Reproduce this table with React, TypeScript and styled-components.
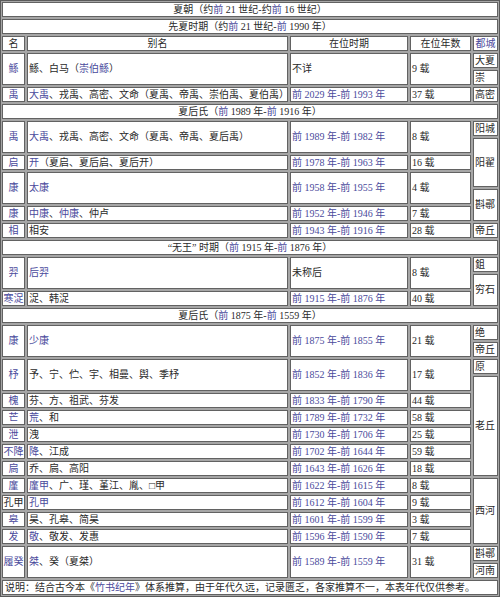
import React from 'react';
import styled, { createGlobalStyle } from 'styled-components';

const GlobalStyle = createGlobalStyle`
  body {
    margin: 0;
    background: #ffffff;
  }
`;

const Table = styled.div`
  display: grid;
  grid-template-columns: 23px 261px 118px 61px 25px;
  grid-auto-rows: 15px;
  gap: 2px;
  width: 500px;
  box-sizing: border-box;
  padding: 1px;
  border: 1px solid #5a5a5a;
  background: #a6a6a6;
  font-family: "Liberation Serif", "Noto Sans CJK SC", serif;
  font-size: 10px;
  color: #2a2a2a;
`;

const CellBox = styled.div<{ $row: string; $col: string; $center?: boolean }>`
  grid-row: ${p => p.$row};
  grid-column: ${p => p.$col};
  display: flex;
  align-items: center;
  justify-content: ${p => (p.$center ? 'center' : 'flex-start')};
  box-sizing: border-box;
  padding: 0 1px;
  background: #ffffff;
  border: 1px solid #626262;
  white-space: nowrap;
  overflow: hidden;
  line-height: 1;
`;

const Link = styled.span`
  color: #4a4a9c;
`;

const Note = styled.span`
  padding-left: 1px;
`;

type CellProps = {
  row: string;
  col: string;
  center?: boolean;
  children?: React.ReactNode;
};

// one text run per cell, so spaces next to links survive flex layout
const Cell: React.FC<CellProps> = ({ row, col, center, children }) => (
  <CellBox $row={row} $col={col} $center={center}>
    <span>{children}</span>
  </CellBox>
);

type Reign = {
  name: React.ReactNode;
  alias: React.ReactNode;
  period: React.ReactNode;
  years: string;
  rows?: number;
};

type Section = {
  title: React.ReactNode;
  reigns: Reign[];
  capitals: [string, number][];
};

const Q = () => <Link>前</Link>;

const span = (from: number, to: number) => (
  <Link>
    前 {from} 年-前 {to} 年
  </Link>
);

const sections: Section[] = [
  {
    title: (
      <>
        夏后氏（<Q /> 1989 年-<Q /> 1916 年）
      </>
    ),
    reigns: [
      {
        name: <Link>禹</Link>,
        alias: (
          <>
            <Link>大禹</Link>、戎禹、高密、文命（夏禹、帝禹、夏后禹）
          </>
        ),
        period: span(1989, 1982),
        years: '8 载',
        rows: 2,
      },
      {
        name: <Link>启</Link>,
        alias: (
          <>
            <Link>开</Link>（夏启、夏后启、夏后开）
          </>
        ),
        period: span(1978, 1963),
        years: '16 载',
      },
      {
        name: <Link>康</Link>,
        alias: <Link>太康</Link>,
        period: span(1958, 1955),
        years: '4 载',
        rows: 2,
      },
      {
        name: <Link>康</Link>,
        alias: (
          <>
            <Link>中康</Link>、<Link>仲康</Link>、仲卢
          </>
        ),
        period: span(1952, 1946),
        years: '7 载',
      },
      {
        name: <Link>相</Link>,
        alias: '相安',
        period: span(1943, 1916),
        years: '28 载',
      },
    ],
    capitals: [
      ['阳城', 1],
      ['阳翟', 3],
      ['斟鄩', 2],
      ['帝丘', 1],
    ],
  },
  {
    title: (
      <>
        “无王” 时期（<Q /> 1915 年-<Q /> 1876 年）
      </>
    ),
    reigns: [
      {
        name: <Link>羿</Link>,
        alias: <Link>后羿</Link>,
        period: '未称后',
        years: '8 载',
        rows: 2,
      },
      {
        name: <Link>寒浞</Link>,
        alias: '浞、韩浞',
        period: span(1915, 1876),
        years: '40 载',
      },
    ],
    capitals: [
      ['鉏', 1],
      ['穷石', 2],
    ],
  },
  {
    title: (
      <>
        夏后氏（<Q /> 1875 年-<Q /> 1559 年）
      </>
    ),
    reigns: [
      { name: <Link>康</Link>, alias: <Link>少康</Link>, period: span(1875, 1855), years: '21 载', rows: 2 },
      { name: <Link>杼</Link>, alias: '予、宁、伫、宇、相曼、舆、季杼', period: span(1852, 1836), years: '17 载', rows: 2 },
      { name: <Link>槐</Link>, alias: '芬、方、祖武、芬发', period: span(1833, 1790), years: '44 载' },
      {
        name: <Link>芒</Link>,
        alias: (
          <>
            <Link>荒</Link>、和
          </>
        ),
        period: span(1789, 1732),
        years: '58 载',
      },
      { name: <Link>泄</Link>, alias: '洩', period: span(1730, 1706), years: '25 载' },
      {
        name: <Link>不降</Link>,
        alias: (
          <>
            <Link>降</Link>、江成
          </>
        ),
        period: span(1702, 1644),
        years: '59 载',
      },
      { name: <Link>扃</Link>, alias: '乔、扃、高阳', period: span(1643, 1626), years: '18 载' },
      {
        name: <Link>廑</Link>,
        alias: (
          <>
            <Link>廑甲</Link>、广、瑾、堇江、胤、□甲
          </>
        ),
        period: span(1622, 1615),
        years: '8 载',
      },
      { name: '孔甲', alias: <Link>孔甲</Link>, period: span(1612, 1604), years: '9 载' },
      { name: <Link>皋</Link>, alias: '昊、孔皋、简昊', period: span(1601, 1599), years: '3 载' },
      {
        name: <Link>发</Link>,
        alias: (
          <>
            <Link>敬</Link>、敬发、发惠
          </>
        ),
        period: span(1596, 1590),
        years: '7 载',
      },
      {
        name: <Link>履癸</Link>,
        alias: (
          <>
            <Link>桀</Link>、癸（夏桀）
          </>
        ),
        period: span(1589, 1559),
        years: '31 载',
        rows: 2,
      },
    ],
    capitals: [
      ['绝', 1],
      ['帝丘', 1],
      ['原', 1],
      ['老丘', 6],
      ['西河', 4],
      ['斟鄩', 1],
      ['河南', 1],
    ],
  },
];

const firstReigns: Reign[] = [
  {
    name: <Link>鲧</Link>,
    alias: (
      <>
        鲧、白马（<Link>崇伯鲧</Link>）
      </>
    ),
    period: '不详',
    years: '9 载',
    rows: 2,
  },
  {
    name: <Link>禹</Link>,
    alias: (
      <>
        <Link>大禹</Link>、戎禹、高密、文命（夏禹、帝禹、崇伯禹、夏伯禹）
      </>
    ),
    period: span(2029, 1993),
    years: '37 载',
  },
];

const renderReigns = (reigns: Reign[], start: number, key: string) => {
  let row = start;
  const out: React.ReactNode[] = [];
  reigns.forEach((r, i) => {
    const n = r.rows ?? 1;
    const rowSpan = `${row} / span ${n}`;
    out.push(
      <Cell key={`${key}-n${i}`} row={rowSpan} col="1" center>
        {r.name}
      </Cell>,
      <Cell key={`${key}-a${i}`} row={rowSpan} col="2">
        {r.alias}
      </Cell>,
      <Cell key={`${key}-p${i}`} row={rowSpan} col="3">
        {r.period}
      </Cell>,
      <Cell key={`${key}-y${i}`} row={rowSpan} col="4">
        {r.years}
      </Cell>
    );
    row += n;
  });
  return { cells: out, next: row };
};

const renderCapitals = (caps: [string, number][], start: number, key: string) => {
  let row = start;
  return caps.map(([name, n], i) => {
    const cell = (
      <Cell key={`${key}-c${i}`} row={`${row} / span ${n}`} col="5">
        {name}
      </Cell>
    );
    row += n;
    return cell;
  });
};

const App: React.FC = () => {
  const cells: React.ReactNode[] = [];
  let row = 1;

  cells.push(
    <Cell key="dynasty" row="1" col="1 / -1" center>
      夏朝（约<Q /> 21 世纪-约<Q /> 16 世纪）
    </Cell>,
    <Cell key="prexia" row="2" col="1 / -1" center>
      先夏时期（约<Q /> 21 世纪-<Q /> 1990 年）
    </Cell>,
    <Cell key="h1" row="3" col="1" center>名</Cell>,
    <Cell key="h2" row="3" col="2" center>别名</Cell>,
    <Cell key="h3" row="3" col="3" center>在位时期</Cell>,
    <Cell key="h4" row="3" col="4" center>在位年数</Cell>,
    <Cell key="h5" row="3" col="5" center>
      <Link>都城</Link>
    </Cell>
  );
  row = 4;

  const first = renderReigns(firstReigns, row, 's0');
  cells.push(
    ...first.cells,
    ...renderCapitals(
      [
        ['大夏', 1],
        ['崇', 1],
        ['高密', 1],
      ],
      row,
      's0'
    )
  );
  row = first.next;

  sections.forEach((s, si) => {
    cells.push(
      <Cell key={`t${si}`} row={`${row}`} col="1 / -1" center>
        {s.title}
      </Cell>
    );
    row += 1;
    const body = renderReigns(s.reigns, row, `s${si + 1}`);
    cells.push(...body.cells, ...renderCapitals(s.capitals, row, `s${si + 1}`));
    row = body.next;
  });

  cells.push(
    <Cell key="note" row={`${row}`} col="1 / -1">
      <Note>
        说明：结合古今本《<Link>竹书纪年</Link>》体系推算，由于年代久远，记录匮乏，各家推算不一，本表年代仅供参考。
      </Note>
    </Cell>
  );

  return (
    <>
      <GlobalStyle />
      <Table>{cells}</Table>
    </>
  );
};

export default App;
